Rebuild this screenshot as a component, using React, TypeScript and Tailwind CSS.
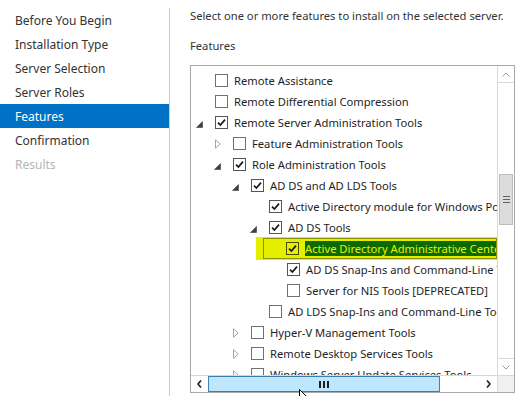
import React from "react";

type Row = {
  level: number;
  label: string;
  checked: boolean;
  expander?: "open" | "closed";
  highlight?: boolean;
};

const rows: Row[] = [
  { level: 0, label: "Remote Assistance", checked: false },
  { level: 0, label: "Remote Differential Compression", checked: false },
  { level: 0, label: "Remote Server Administration Tools", checked: true, expander: "open" },
  { level: 1, label: "Feature Administration Tools", checked: false, expander: "closed" },
  { level: 1, label: "Role Administration Tools", checked: true, expander: "open" },
  { level: 2, label: "AD DS and AD LDS Tools", checked: true, expander: "open" },
  { level: 3, label: "Active Directory module for Windows PowerShell", checked: true },
  { level: 3, label: "AD DS Tools", checked: true, expander: "open" },
  { level: 4, label: "Active Directory Administrative Center", checked: true, highlight: true },
  { level: 4, label: "AD DS Snap-Ins and Command-Line Tools", checked: true },
  { level: 4, label: "Server for NIS Tools [DEPRECATED]", checked: false },
  { level: 3, label: "AD LDS Snap-Ins and Command-Line Tools", checked: false },
  { level: 2, label: "Hyper-V Management Tools", checked: false, expander: "closed" },
  { level: 2, label: "Remote Desktop Services Tools", checked: false, expander: "closed" },
  { level: 2, label: "Windows Server Update Services Tools", checked: false, expander: "closed" },
];

const nav = [
  "Before You Begin",
  "Installation Type",
  "Server Selection",
  "Server Roles",
  "Features",
  "Confirmation",
  "Results",
];

function Expander({ kind }: { kind?: "open" | "closed" }) {
  if (kind === "open") {
    return (
      <svg width="7" height="7" viewBox="0 0 7 7" className="ml-[3px] mt-[3px]">
        <path d="M6.5 0.5 L6.5 6.5 L0.5 6.5 Z" fill="#404040" stroke="#404040" strokeWidth="0.6" />
      </svg>
    );
  }
  if (kind === "closed") {
    return (
      <svg width="6" height="10" viewBox="0 0 6 10" className="ml-[4px]">
        <path d="M0.5 0.8 L5.2 5 L0.5 9.2 Z" fill="none" stroke="#a6a6a6" strokeWidth="1" />
      </svg>
    );
  }
  return null;
}

function Checkbox({ checked, highlight }: { checked: boolean; highlight?: boolean }) {
  return (
    <div
      className={
        highlight
          ? "w-[13px] h-[13px] border border-[#4a4a00] bg-[#e6ef00] flex items-center justify-center shrink-0"
          : checked
          ? "w-[13px] h-[13px] border border-[#555555] bg-white flex items-center justify-center shrink-0"
          : "w-[13px] h-[13px] border border-[#707070] bg-white shrink-0"
      }
    >
      {checked && (
        <svg width="11" height="11" viewBox="0 0 11 11">
          <path d="M2 5.6 L4.4 8 L9 2.6" fill="none" stroke="#1a1a1a" strokeWidth="1.7" />
        </svg>
      )}
    </div>
  );
}

function TreeRow({ row }: { row: Row }) {
  const indent = 2 + row.level * 18;
  if (row.highlight) {
    return (
      <div className="h-[23px] -my-[1px] ml-[65px] bg-[#e4ef00] pl-[7px] py-[1px] flex">
        <div className="flex-1 border border-[#8c9400] flex items-center pl-[22px] whitespace-nowrap overflow-hidden">
          <Checkbox checked highlight />
          <span className="ml-[6px] bg-[#0b6b00] text-[#e8f000] h-[15px] leading-[15px] pr-[4px]">
            {row.label}
          </span>
        </div>
      </div>
    );
  }
  return (
    <div className="h-[21px] flex items-center whitespace-nowrap" style={{ paddingLeft: indent }}>
      <div className="w-[22px] shrink-0 flex items-center">
        <Expander kind={row.expander} />
      </div>
      <Checkbox checked={row.checked} />
      <span className="ml-[6px] text-[#1e1e1e]">{row.label}</span>
    </div>
  );
}

export default function App() {
  return (
    <div
      className="w-[519px] h-[396px] bg-white flex overflow-hidden relative text-[12px] leading-[16px]"
      style={{ fontFamily: '"Noto Sans", "Open Sans", sans-serif' }}
    >
      {/* Left nav */}
      <div className="w-[169px] pt-[8px] shrink-0">
        {nav.map((n) => (
          <div
            key={n}
            className={
              n === "Features"
                ? "h-[24px] pl-[15px] pt-[2px] flex items-center bg-[#0072c6] text-white"
                : n === "Results"
                ? "h-[24px] pl-[15px] pt-[2px] flex items-center text-[#b5b5b5]"
                : "h-[24px] pl-[15px] pt-[2px] flex items-center text-[#333333]"
            }
          >
            {n}
          </div>
        ))}
      </div>
      <div className="w-px mt-[8px] bg-[#cccccc] shrink-0" />

      {/* Right content */}
      <div className="pl-[20px] flex flex-col text-[11.2px]">
        <div className="pt-[8px] text-[#333333] whitespace-nowrap">
          Select one or more features to install on the selected server.
        </div>
        <div className="mt-[14px] text-[#333333]">Features</div>
        <div className="mt-[11px] w-[325px] h-[328px] border border-[#a8a8a8] flex flex-col">
          <div className="flex flex-1 min-h-0">
            <div className="flex-1 overflow-hidden pt-[4px]">
              {rows.map((r) => (
                <TreeRow key={r.label} row={r} />
              ))}
            </div>
            {/* vertical scrollbar */}
            <div className="w-[17px] border-l border-[#d9d9d9] flex flex-col bg-white">
              <div className="h-[17px] border-b border-[#d9d9d9] flex items-center justify-center">
                <svg width="8" height="5" viewBox="0 0 8 5">
                  <path d="M0.5 4.5 L4 1 L7.5 4.5" fill="none" stroke="#9a9a9a" strokeWidth="1" />
                </svg>
              </div>
              <div className="h-[91px]" />
              <div className="h-[51px] mx-[1px] bg-[#dcdcdc] border border-[#bcbcbc] flex flex-col items-center justify-center gap-[2px]">
                <div className="w-[7px] h-px bg-[#606060]" />
                <div className="w-[7px] h-px bg-[#606060]" />
                <div className="w-[7px] h-px bg-[#606060]" />
              </div>
              <div className="flex-1" />
              <div className="h-[17px] border-t border-[#d9d9d9] flex items-center justify-center">
                <svg width="8" height="5" viewBox="0 0 8 5">
                  <path d="M0.5 0.5 L4 4 L7.5 0.5" fill="none" stroke="#9a9a9a" strokeWidth="1" />
                </svg>
              </div>
            </div>
          </div>
          {/* horizontal scrollbar */}
          <div className="h-[17px] flex border-t border-[#d9d9d9]">
            <div className="w-[17px] flex items-center justify-center">
              <svg width="5" height="8" viewBox="0 0 5 8">
                <path d="M4 0.5 L1 4 L4 7.5" fill="none" stroke="#1e1e1e" strokeWidth="1.6" />
              </svg>
            </div>
            <div className="w-[232px] bg-[#bee6fd] border border-[#3c7fb1] flex items-center justify-center gap-[2px]">
              <div className="w-[2px] h-[7px] bg-[#1e1e1e]" />
              <div className="w-[2px] h-[7px] bg-[#1e1e1e]" />
              <div className="w-[2px] h-[7px] bg-[#1e1e1e]" />
            </div>
            <div className="flex-1" />
            <div className="w-[17px] flex items-center justify-center">
              <svg width="5" height="8" viewBox="0 0 5 8">
                <path d="M1 0.5 L4 4 L1 7.5" fill="none" stroke="#1e1e1e" strokeWidth="1.6" />
              </svg>
            </div>
            <div className="w-[17px] bg-[#f0f0f0] border-l border-[#d9d9d9]" />
          </div>
        </div>
      </div>

      {/* mouse cursor */}
      <svg width="12" height="19" viewBox="0 0 12 19" className="absolute left-[299px] top-[389px]">
        <path d="M0.5 0.5 L0.5 15 L4 11.5 L6.5 17.5 L8.5 16.5 L6 10.8 L11 10.8 Z" fill="white" stroke="black" strokeWidth="1" />
      </svg>
    </div>
  );
}
